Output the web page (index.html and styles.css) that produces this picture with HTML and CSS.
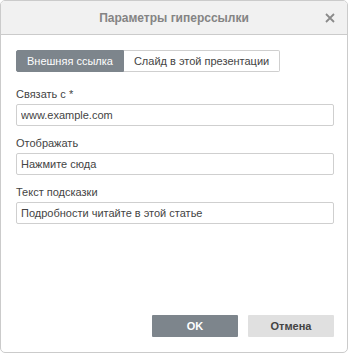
FILE: index.html
```html
<!DOCTYPE html>
<html lang="ru">
<head>
  <meta charset="UTF-8" />
  <title>Параметры гиперссылки</title>
  <link rel="stylesheet" href="styles.css">
</head>
<body>

  <div class="dialog">
    <div class="dialog-header">
      <span class="dialog-title">Параметры гиперссылки</span>
      <span class="close-btn" title="Закрыть">
        <svg width="10" height="10" viewBox="0 0 10 10">
          <path d="M1 1 L9 9 M9 1 L1 9" stroke="#8a8a8a" stroke-width="1.8" fill="none"/>
        </svg>
      </span>
    </div>

    <div class="dialog-body">
      <div class="tabs">
        <button class="tab active">Внешняя ссылка</button>
        <button class="tab">Слайд в этой презентации</button>
      </div>

      <div class="field">
        <label>Связать с *</label>
        <input type="text" value="www.example.com">
      </div>

      <div class="field">
        <label>Отображать</label>
        <input type="text" value="Нажмите сюда">
      </div>

      <div class="field">
        <label>Текст подсказки</label>
        <input type="text" value="Подробности читайте в этой статье">
      </div>
    </div>

    <div class="dialog-footer">
      <button class="btn btn-primary">OK</button>
      <button class="btn">Отмена</button>
    </div>
  </div>

</body>
</html>
```

FILE: styles.css
```css
body {
  margin: 0;
  padding: 0;
  background: #fff;
  font-family: 'Liberation Sans', Arial, sans-serif;
  font-size: 11px;
  color: #444;
}

.dialog {
  width: 348px;
  height: 353px;
  box-sizing: border-box;
  border: 1px solid #cbcbcb;
  border-radius: 5px;
  background: #fff;
  display: flex;
  flex-direction: column;
  overflow: hidden;
}

.dialog-header {
  height: 33px;
  background: #f1f1f1;
  border-bottom: 1px solid #cbcbcb;
  display: flex;
  align-items: center;
  justify-content: center;
  position: relative;
}

.dialog-title {
  font-size: 12px;
  font-weight: bold;
  color: #848484;
}

.close-btn {
  position: absolute;
  right: 12px;
  top: 12px;
  width: 10px;
  height: 10px;
  display: flex;
}

.dialog-body {
  padding: 15px 14px 0 15px;
}

.tabs {
  display: flex;
  margin-bottom: 15px;
}

.tab {
  height: 22px;
  padding: 0 10px;
  border: 1px solid #cfcfcf;
  background: #fff;
  color: #444;
  font-family: inherit;
  font-size: 11px;
  cursor: pointer;
}

.tab:first-child {
  border-radius: 2px 0 0 2px;
}

.tab:last-child {
  border-left: none;
  border-radius: 0 2px 2px 0;
}

.tab.active {
  background: #7d858c;
  border-color: #7d858c;
  color: #fff;
}

.field {
  margin-bottom: 10px;
}

.field label {
  display: block;
  line-height: 14px;
  margin-bottom: 3px;
}

.field input {
  display: block;
  width: 318px;
  height: 22px;
  box-sizing: border-box;
  border: 1px solid #cfcfcf;
  border-radius: 2px;
  padding: 0 4px;
  font-family: inherit;
  font-size: 11px;
  color: #444;
  outline: none;
}

.dialog-footer {
  margin-top: auto;
  display: flex;
  justify-content: flex-end;
  gap: 10px;
  padding: 0 13px 15px 0;
}

.btn {
  width: 86px;
  height: 22px;
  border: none;
  border-radius: 1px;
  background: #e0e0e0;
  color: #444;
  font-family: inherit;
  font-size: 11px;
  font-weight: bold;
  cursor: pointer;
}

.btn-primary {
  background: #7d858c;
  color: #fff;
}
```
